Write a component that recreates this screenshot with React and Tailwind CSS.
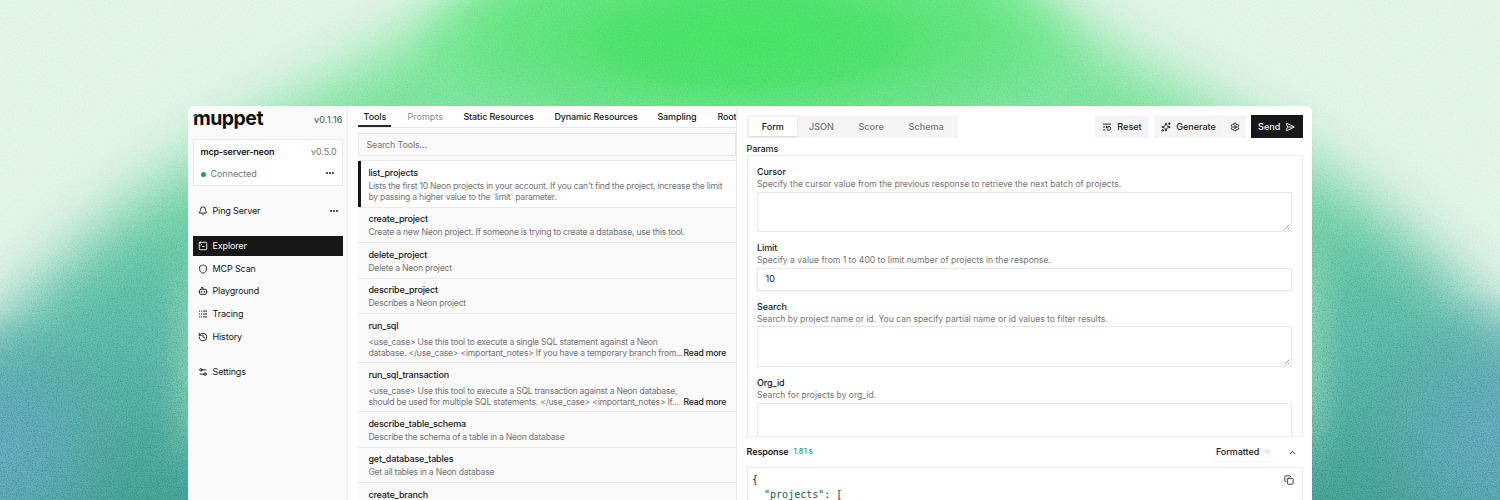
import React from "react";
import {
  Bell,
  Bot,
  ChevronDown,
  ChevronUp,
  Copy,
  Ellipsis,
  History,
  ListRestart,
  Logs,
  SendHorizontal,
  Settings,
  Settings2,
  Shield,
  Sparkles,
  SquareTerminal,
} from "lucide-react";

const ARCH =
  "M-150 700 L-150 450 L0 324 L60 268 L120 212 L180 166 L250 124 L330 82 L400 42 L460 -4 L530 -90 L970 -90 L1040 -4 L1100 42 L1170 82 L1250 124 L1320 166 L1380 212 L1440 268 L1500 324 L1650 450 L1650 700 Z";

function Backdrop() {
  return (
    <svg className="absolute inset-0 h-[500px] w-[1500px]" viewBox="0 0 1500 500" aria-hidden="true">
      <defs>
        <linearGradient id="arch" gradientUnits="userSpaceOnUse" x1="0" y1="0" x2="0" y2="500">
          <stop offset="0" stopColor="#74ea90" />
          <stop offset="0.2" stopColor="#80e79e" />
          <stop offset="0.36" stopColor="#84dcae" />
          <stop offset="0.5" stopColor="#68cba8" />
          <stop offset="0.7" stopColor="#62bdb0" />
          <stop offset="1" stopColor="#4ba69c" />
        </linearGradient>
        <radialGradient id="core">
          <stop offset="0" stopColor="#4ae467" />
          <stop offset="0.4" stopColor="#4ce569" stopOpacity="0.85" />
          <stop offset="0.75" stopColor="#54e670" stopOpacity="0.35" />
          <stop offset="1" stopColor="#5ce878" stopOpacity="0" />
        </radialGradient>
        <radialGradient id="blue">
          <stop offset="0" stopColor="#6fb0c8" stopOpacity="0.9" />
          <stop offset="0.5" stopColor="#6ab0c2" stopOpacity="0.6" />
          <stop offset="1" stopColor="#5fb0b4" stopOpacity="0" />
        </radialGradient>
        <filter id="soft" filterUnits="userSpaceOnUse" x="-250" y="-220" width="2000" height="1000" colorInterpolationFilters="sRGB">
          <feGaussianBlur stdDeviation="31" />
        </filter>
        <filter id="small" filterUnits="userSpaceOnUse" x="0" y="100" width="1500" height="400" colorInterpolationFilters="sRGB">
          <feGaussianBlur stdDeviation="15 30" />
        </filter>
        <filter id="grain" x="0" y="0" width="100%" height="100%" colorInterpolationFilters="sRGB">
          <feTurbulence type="fractalNoise" baseFrequency="0.8" numOctaves="2" seed="4" />
          <feColorMatrix values="0 0 0 0 0.05  0 0 0 0 0.4  0 0 0 0 0.35  2.4 0 0 0 -1" />
        </filter>
        <linearGradient id="fade" x1="0" y1="0" x2="0" y2="1">
          <stop offset="0" stopColor="#333" />
          <stop offset="0.3" stopColor="#555" />
          <stop offset="0.7" stopColor="#fff" />
        </linearGradient>
        <mask id="archMask" maskUnits="userSpaceOnUse" x="0" y="0" width="1500" height="500">
          <rect width="1500" height="500" fill="#181818" />
          <path d={ARCH} fill="url(#fade)" filter="url(#soft)" />
        </mask>
      </defs>
      <rect width="1500" height="500" fill="#e4f5ea" />
      <path d={ARCH} fill="url(#arch)" filter="url(#soft)" />
      <ellipse cx="750" cy="42" rx="345" ry="105" fill="url(#core)" />
      <ellipse cx="0" cy="450" rx="135" ry="140" fill="url(#blue)" />
      <ellipse cx="1500" cy="440" rx="145" ry="150" fill="url(#blue)" />
      <rect x="180" y="265" width="30" height="180" fill="#9ce0ba" opacity="0.85" filter="url(#small)" />
      <rect x="1290" y="250" width="34" height="190" fill="#9ce0ba" opacity="0.85" filter="url(#small)" />
      <g mask="url(#archMask)">
        <rect width="1500" height="500" filter="url(#grain)" opacity="0.4" />
      </g>
    </svg>
  );
}

const NAV = [
  { label: "Explorer", Icon: SquareTerminal, active: true },
  { label: "MCP Scan", Icon: Shield },
  { label: "Playground", Icon: Bot },
  { label: "Tracing", Icon: Logs },
  { label: "History", Icon: History },
];

function NavItem({ label, Icon, active }) {
  return (
    <div
      className={
        active
          ? "flex h-5 items-center gap-[5px] bg-[#171717] pl-[5px] text-[#fafafa]"
          : "flex h-5 items-center gap-[5px] pl-[5px] text-[#171717]"
      }
    >
      <Icon size={10} strokeWidth={2.2} />
      <span>{label}</span>
    </div>
  );
}

function Sidebar() {
  return (
    <aside className="flex w-[160px] shrink-0 flex-col border-r border-[#ebebeb] bg-[#fafafa] pr-[4.5px] pl-[4.5px] text-[9px] leading-[12px] tracking-[-0.14px] text-[#171717]">
      <div className="flex h-[32px] shrink-0 items-start justify-between">
        <div className="relative pl-[0.5px]">
          <span className="block text-[19.5px] leading-[25px] font-bold tracking-[-0.55px] text-[#111]">muppet</span>
          <span className="absolute top-[8px] left-0 h-[3px] w-[3px] rounded-full bg-[#35b588]" />
        </div>
        <span className="pt-[8px] font-medium tracking-[0.1px] text-[#666]">v0.1.16</span>
      </div>
      <div className="mt-px flex h-[47px] shrink-0 flex-col border border-[#e8e8e8] bg-white px-[7px] pt-[6px]">
        <div className="flex justify-between">
          <span className="font-semibold tracking-[-0.2px]">mcp-server-neon</span>
          <span className="-mr-[2px] text-[#737373]">v0.5.0</span>
        </div>
        <div className="mt-[9.5px] flex items-center">
          <span className="h-[5px] w-[5px] rounded-full bg-[#16a34a]" />
          <span className="ml-[5px] flex-1 tracking-[-0.05px] text-[#737373]">Connected</span>
          <Ellipsis size={10} strokeWidth={2.8} className="mb-[3px]" />
        </div>
      </div>
      <div className="mt-[15px] flex h-5 shrink-0 items-center gap-[5px] px-[5px]">
        <Bell size={10} strokeWidth={2.2} />
        <span className="flex-1">Ping Server</span>
        <Ellipsis size={10} strokeWidth={2.8} className="-mr-px" />
      </div>
      <nav className="mt-[15px] flex flex-col gap-[2.7px]">
        {NAV.map((item) => (
          <NavItem key={item.label} {...item} />
        ))}
      </nav>
      <div className="mt-[15.2px]">
        <NavItem label="Settings" Icon={Settings2} />
      </div>
    </aside>
  );
}

const TOOLS = [
  { name: "list_projects", size: "h-[46.5px]", lines: ["Lists the first 10 Neon projects in your account. If you can't find the project, increase the limit", "by passing a higher value to the `limit` parameter."], selected: true },
  { name: "create_project", size: "h-[35.5px]", lines: ["Create a new Neon project. If someone is trying to create a database, use this tool."] },
  { name: "delete_project", size: "h-[35.5px]", lines: ["Delete a Neon project"] },
  { name: "describe_project", size: "h-[35.5px]", lines: ["Describes a Neon project"] },
  { name: "run_sql", size: "h-[49px]", lines: ["<use_case> Use this tool to execute a single SQL statement against a Neon", "database. </use_case> <important_notes> If you have a temporary branch from..."], more: true },
  { name: "run_sql_transaction", size: "h-[49px]", lines: ["<use_case> Use this tool to execute a SQL transaction against a Neon database,", "should be used for multiple SQL statements. </use_case> <important_notes> If..."], more: true },
  { name: "describe_table_schema", size: "h-[35.5px]", lines: ["Describe the schema of a table in a Neon database"] },
  { name: "get_database_tables", size: "h-[35.5px]", lines: ["Get all tables in a Neon database"] },
  { name: "create_branch", size: "h-[35.5px]", lines: [] },
];

function ToolRow({ name, size, lines, selected, more }) {
  return (
    <div className={`${size} shrink-0 border-b border-[#ebebeb] ${selected ? "relative bg-white pl-[10px]" : "pl-[10px]"}`}>
      {selected && <span className="absolute inset-y-0 left-0 w-[2.6px] bg-[#171717]" />}
      <div className="pt-[5.7px] text-[9px] leading-[12px] font-medium tracking-[-0.17px] text-[#171717]">{name}</div>
      <div className={`${more ? "mt-[5px]" : "mt-[1.6px]"} flex items-end justify-between pr-[10px] text-[8.6px] leading-[11px] tracking-[-0.23px] text-[#737373]`}>
        <div className="whitespace-nowrap">
          {lines.map((line) => (
            <div key={line}>{line}</div>
          ))}
        </div>
        {more && <span className="font-medium tracking-[-0.19px] whitespace-nowrap text-[#171717]">Read more</span>}
      </div>
    </div>
  );
}

function ToolsPanel() {
  return (
    <section className="flex w-[389px] shrink-0 flex-col overflow-hidden border-r border-[#ebebeb] bg-white pl-[10.4px]">
      <div className="flex h-[22px] shrink-0 border-b border-[#e8e8e8] text-[9px] leading-[21px] font-medium tracking-[-0.12px] whitespace-nowrap text-[#171717]">
        <span className="h-[21px] w-[33px] shrink-0 border-b-2 border-[#2a2a2a] text-center">Tools</span>
        <span className="w-[67px] shrink-0 pl-[16px] font-normal tracking-[0.05px] text-[#8a8a8a]">Prompts</span>
        <span className="w-[91px] shrink-0 pl-[5px]">Static Resources</span>
        <span className="w-[103px] shrink-0 pl-[5px]">Dynamic Resources</span>
        <span className="w-[60px] shrink-0 pl-[5px]">Sampling</span>
        <span className="shrink-0 pl-[5px]">Roots</span>
      </div>
      <div className="flex shrink-0 flex-col bg-[#fafafa] pt-[5px]">
        <div className="flex h-[23px] items-center border border-[#e8e8e8] pt-px pl-[7px] text-[9px] tracking-[-0.18px] text-[#737373]">Search Tools...</div>
        <div className="mt-[4.3px] flex flex-col border-t border-[#ebebeb]">
          {TOOLS.map((tool) => (
            <ToolRow key={tool.name} {...tool} />
          ))}
        </div>
      </div>
    </section>
  );
}

function ResizeGrip() {
  return (
    <svg className="absolute right-px bottom-px h-[6px] w-[6px]" viewBox="0 0 6 6" stroke="#777" strokeWidth="0.7">
      <path d="M0.5 5.5 L5.5 0.5 M3.5 5.5 L5.5 3.5" />
    </svg>
  );
}

function Field({ label, hint, children }) {
  return (
    <div className="flex flex-col">
      <span className="text-[9px] leading-[12px] font-medium tracking-[-0.08px] text-[#171717]">{label}</span>
      <span className="mb-[1.1px] text-[8.6px] leading-[12.4px] tracking-[-0.015px] text-[#737373]">{hint}</span>
      {children}
    </div>
  );
}

function RequestPanel() {
  return (
    <section className="flex min-w-0 flex-1 flex-col bg-white pr-[9.5px] pl-[9.5px] text-[9px] leading-[12px] text-[#171717]">
      <div className="mt-[9.4px] flex h-[22.6px] shrink-0 items-stretch text-[9.1px] font-medium">
        <div className="flex w-[211.5px] items-center bg-[#f5f5f5] p-[2px] text-center text-[#737373]">
          <span className="flex h-[18.6px] w-[49px] items-center justify-center bg-white text-[#171717] shadow-sm">Form</span>
          <span className="w-[49px]">JSON</span>
          <span className="w-[51px]">Score</span>
          <span className="w-[60px]">Schema</span>
        </div>
        <div className="ml-auto flex">
          <div className="flex w-[54px] items-center justify-center gap-[5px] bg-[#f5f5f5]">
            <ListRestart size={10} strokeWidth={2.2} />
            Reset
          </div>
          <div className="ml-[5px] flex w-[69px] items-center justify-center gap-[5px] bg-[#f5f5f5] tracking-[-0.05px]">
            <Sparkles size={10} strokeWidth={2.2} />
            Generate
          </div>
          <div className="flex w-[23px] items-center justify-center border-l border-white/60 bg-[#f5f5f5]">
            <Settings size={10} strokeWidth={2.2} />
          </div>
          <div className="ml-[5px] flex w-[51.5px] items-center justify-center gap-[5px] bg-[#171717] text-[#fafafa]">
            Send
            <SendHorizontal size={10} strokeWidth={2.2} />
          </div>
        </div>
      </div>
      <div className="mt-[5px] shrink-0 font-medium tracking-[-0.1px]">Params</div>
      <div className="flex h-[282px] shrink-0 flex-col gap-[10px] overflow-hidden border border-[#ebebeb] px-[9.5px] pt-[10.4px]">
        <Field label="Cursor" hint="Specify the cursor value from the previous response to retrieve the next batch of projects.">
          <div className="relative h-[40.6px] border border-[#e8e8e8]">
            <ResizeGrip />
          </div>
        </Field>
        <Field label="Limit" hint="Specify a value from 1 to 400 to limit number of projects in the response.">
          <div className="flex h-[23px] items-center border border-[#e8e8e8] pl-[7.5px] shadow-xs">10</div>
        </Field>
        <Field label="Search" hint="Search by project name or id. You can specify partial name or id values to filter results.">
          <div className="relative h-[41px] border border-[#e8e8e8]">
            <ResizeGrip />
          </div>
        </Field>
        <Field label="Org_id" hint="Search for projects by org_id.">
          <div className="h-[41px] border border-[#e8e8e8]" />
        </Field>
      </div>
      <div className="flex h-[30.4px] shrink-0 items-center">
        <span className="font-semibold tracking-[-0.1px]">Response</span>
        <span className="ml-[5px] text-[7.6px] font-medium text-[#16a34a]">1.81 s</span>
        <div className="ml-auto flex h-[20px] w-[64px] items-center justify-between border-b border-[#f7f7f7] pr-[5px] pl-[3.4px] font-medium tracking-[-0.05px]">
          Formatted
          <ChevronDown size={9} className="text-[#aaa]" />
        </div>
        <ChevronUp size={9} strokeWidth={2.6} className="mr-[6px] ml-[11px]" />
      </div>
      <div className="flex h-[60px] shrink-0 justify-between border border-[#ebebeb] pt-[5px] pr-[8px] pl-[4.5px]">
        <pre className="font-['DejaVu_Sans_Mono',monospace] text-[10px] leading-[14.8px] text-[#24292e]">
          {"{\n  "}
          <span className="text-[#1d5c33]">"projects"</span>
          {": ["}
        </pre>
        <Copy size={10} className="mt-[2px]" />
      </div>
    </section>
  );
}

export default function App() {
  return (
    <div className="relative h-[500px] w-[1500px] overflow-hidden font-['Inter','Liberation_Sans',sans-serif]">
      <Backdrop />
      <main className="relative mt-[106px] ml-[188px] flex h-[394px] w-[1124px] overflow-hidden rounded-t-[6px] bg-white">
        <Sidebar />
        <ToolsPanel />
        <RequestPanel />
      </main>
    </div>
  );
}
